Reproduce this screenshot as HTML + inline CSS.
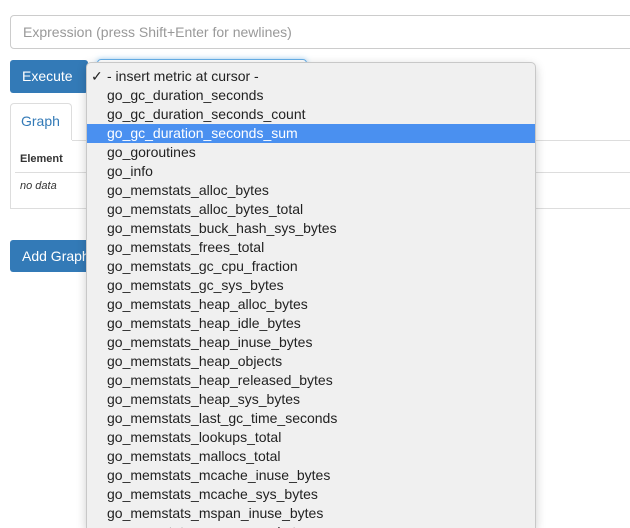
<html style="overflow:hidden;width:630px;height:528px"><head><style>
body{margin:0;width:630px;height:528px;overflow:hidden;background:#fff;font-family:"Liberation Sans",sans-serif;position:relative}
.a{position:absolute}
.inp{left:10px;top:15px;width:640px;border:1px solid #ccc;border-radius:4px;color:#999;font-size:14px;line-height:32px;padding-left:12px;box-sizing:border-box;height:34px}
.btn{background:#337ab7;color:#fff;font-size:14px;border-radius:3px}
.menu{left:86px;top:62px;width:448px;height:466px;background:#f0f0f0;border:1px solid #c8c8c8;border-bottom:none;border-radius:5px 5px 0 0;box-shadow:0 3px 10px rgba(0,0,0,.2);overflow:hidden}
.it{position:absolute;left:20px;font-size:14px;color:#222;height:19px;line-height:19px;white-space:nowrap}
</style></head><body>
<div class="a inp">Expression (press Shift+Enter for newlines)</div>
<div class="a btn" style="left:10px;top:60px;width:78px;height:33px;line-height:33px;padding-left:12px;box-sizing:border-box">Execute</div>
<div class="a" style="left:97px;top:59px;width:208px;height:10px;border:1px solid #66afe9;border-radius:4px;box-shadow:0 0 6px rgba(102,175,233,.6)"></div>
<div class="a" style="left:10px;top:103px;width:62px;height:37px;border:1px solid #ddd;border-bottom:none;border-radius:4px 4px 0 0;background:#fff;color:#337ab7;font-size:14px;line-height:35px;padding-left:10px;box-sizing:border-box">Graph</div>
<div class="a" style="left:72px;top:140px;width:560px;border-top:1px solid #ddd"></div>
<div class="a" style="left:10px;top:140px;width:630px;height:68px;border:1px solid #ddd;border-top:none"></div>
<div class="a" style="left:20px;top:153px;font-size:11px;font-weight:bold;color:#333">Element</div>
<div class="a" style="left:15px;top:172px;width:620px;border-top:1px solid #ddd"></div>
<div class="a" style="left:20px;top:180px;font-size:11px;font-style:italic;color:#333">no data</div>
<div class="a btn" style="left:10px;top:240px;width:90px;height:32px;line-height:32px;padding-left:12px;box-sizing:border-box">Add Graph</div>
<div class="a menu">
<div style="position:absolute;left:0;top:61px;width:448px;height:19px;background:#4a90f0"></div>
<div class="it" style="left:4px;top:4px">✓</div>
<div class="it" style="top:4px">- insert metric at cursor -</div>
<div class="it" style="top:23px">go_gc_duration_seconds</div>
<div class="it" style="top:42px">go_gc_duration_seconds_count</div>
<div class="it" style="top:61px;color:#fff">go_gc_duration_seconds_sum</div>
<div class="it" style="top:80px">go_goroutines</div>
<div class="it" style="top:99px">go_info</div>
<div class="it" style="top:118px">go_memstats_alloc_bytes</div>
<div class="it" style="top:137px">go_memstats_alloc_bytes_total</div>
<div class="it" style="top:156px">go_memstats_buck_hash_sys_bytes</div>
<div class="it" style="top:175px">go_memstats_frees_total</div>
<div class="it" style="top:194px">go_memstats_gc_cpu_fraction</div>
<div class="it" style="top:213px">go_memstats_gc_sys_bytes</div>
<div class="it" style="top:232px">go_memstats_heap_alloc_bytes</div>
<div class="it" style="top:251px">go_memstats_heap_idle_bytes</div>
<div class="it" style="top:270px">go_memstats_heap_inuse_bytes</div>
<div class="it" style="top:289px">go_memstats_heap_objects</div>
<div class="it" style="top:308px">go_memstats_heap_released_bytes</div>
<div class="it" style="top:327px">go_memstats_heap_sys_bytes</div>
<div class="it" style="top:346px">go_memstats_last_gc_time_seconds</div>
<div class="it" style="top:365px">go_memstats_lookups_total</div>
<div class="it" style="top:384px">go_memstats_mallocs_total</div>
<div class="it" style="top:403px">go_memstats_mcache_inuse_bytes</div>
<div class="it" style="top:422px">go_memstats_mcache_sys_bytes</div>
<div class="it" style="top:441px">go_memstats_mspan_inuse_bytes</div>
<div class="it" style="top:460px">go_memstats_mspan_sys_bytes</div>
</div>
</body></html>
